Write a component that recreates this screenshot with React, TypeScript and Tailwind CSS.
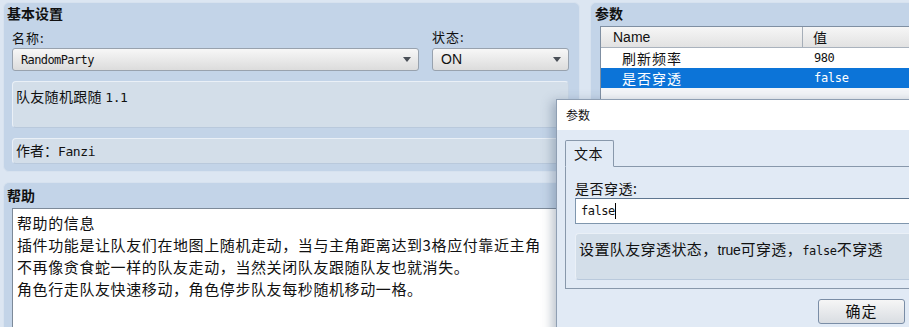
import type { ReactNode } from 'react'

const cjk = "font-['Noto_Sans_CJK_SC',sans-serif]"
const mono = "font-['DejaVu_Sans_Mono','Noto_Sans_CJK_SC',monospace]"

function Arrow() {
  return (
    <svg width="8" height="5" viewBox="0 0 8 5" className="shrink-0">
      <path d="M0 0 H8 L4 5 Z" fill="#4a4f57" />
    </svg>
  )
}

function Select({ children, className }: { children: ReactNode; className?: string }) {
  return (
    <div className={`h-[23px] flex items-center justify-between pl-[8px] pr-[7px] rounded-[3px] border border-[#98a2ae] bg-gradient-to-b from-[#f7f7f7] to-[#dcdcdc] ${className ?? ''}`}>
      {children}
      <Arrow />
    </div>
  )
}

function Box({ children, className }: { children: ReactNode; className?: string }) {
  return (
    <div className={`rounded-[4px] border border-[#eaf0f7] border-b-[#b9c9dc] border-r-[#c6d4e4] bg-[#d3dee9] ${className ?? ''}`}>
      {children}
    </div>
  )
}

export default function App() {
  return (
    <div className={`relative w-[909px] h-[327px] overflow-hidden bg-[#dce6f2] flex gap-[10px] pl-[3px] pt-[2px] text-[#111] ${cjk}`}>
      {/* left column */}
      <div className="w-[577px] shrink-0 flex flex-col gap-[10px]">
        {/* 基本设置 */}
        <div className="h-[170px] shrink-0 rounded-[6px] bg-[#c3d4e8] border border-[#d7e2ef] pl-[8px] pr-[10px]">
          <div className="h-[21px] leading-[21px] text-[14px] font-bold -ml-[5px]">基本设置</div>
          <div className="flex gap-[13px]">
            <div className="w-[407px]">
              <div className="h-[24px] pt-[3px] leading-[21px] text-[13px] tracking-[1px]">名称:</div>
              <Select>
                <span className={`${mono} text-[12px] tracking-[-0.6px]`}>RandomParty</span>
              </Select>
            </div>
            <div className="w-[137px]">
              <div className="h-[24px] pt-[2px] leading-[21px] text-[13px] tracking-[1px]">状态:</div>
              <Select>
                <span className="font-['Liberation_Sans',sans-serif] text-[14px]">ON</span>
              </Select>
            </div>
          </div>
          <Box className="mt-[10px] h-[47px] pl-[3px] pt-[4px]">
            <div className="leading-[20px] text-[14px] tracking-[0.3px]">
              队友随机跟随 <span className={`${mono} text-[13px] tracking-[-0.4px]`}>1.1</span>
            </div>
          </Box>
          <Box className="mt-[10px] h-[26px] pl-[3px] flex items-center">
            <span className="text-[14px] leading-[20px]">作者：<span className={`${mono} text-[13px] tracking-[-0.4px]`}>Fanzi</span></span>
          </Box>
        </div>

        {/* 帮助 */}
        <div className="flex-1 min-h-0 rounded-t-[6px] bg-[#c3d4e8] border border-[#d7e2ef] border-b-0 pl-[8px] pr-[10px]">
          <div className="h-[25px] leading-[25px] text-[14px] font-bold -ml-[5px]">帮助</div>
          <div className="h-[130px] bg-white border border-[#7d8a99] pl-[4px] pt-[3px] text-[15px] leading-[22px] tracking-[0.6px]">
            <div>帮助的信息</div>
            <div>插件功能是让队友们在地图上随机走动，当与主角距离达到3格应付靠近主角</div>
            <div>不再像贪食蛇一样的队友走动，当然关闭队友跟随队友也就消失。</div>
            <div>角色行走队友快速移动，角色停步队友每秒随机移动一格。</div>
          </div>
        </div>
      </div>

      {/* right column: 参数 */}
      <div className="flex-1 rounded-tl-[6px] bg-[#c3d4e8] border border-[#d7e2ef] border-r-0 pl-[9px]">
        <div className="h-[23px] leading-[21px] text-[14px] font-bold -ml-[5px]">参数</div>
        <div className="border border-[#7f8fa2] border-r-0 bg-white">
          <div className="flex h-[21px] bg-gradient-to-b from-[#f6f6f6] to-[#e2e2e2] border-b border-[#a9b2bd] font-['Liberation_Sans',sans-serif] text-[14px] leading-[21px]">
            <div className="w-[202px] pl-[12px] border-r border-[#a6aeb8]">Name</div>
            <div className={`pl-[10px] ${cjk}`}>值</div>
          </div>
          <div className="flex h-[20px] text-[14px] leading-[20px]">
            <div className="w-[202px] pl-[21px] tracking-[1px]">刷新频率</div>
            <div className={`pl-[11px] ${mono} text-[12px] tracking-[-0.5px]`}>980</div>
          </div>
          <div className="flex h-[20px] text-[14px] leading-[20px] bg-[#0c74d8] text-white">
            <div className="w-[202px] pl-[21px] tracking-[1px]">是否穿透</div>
            <div className={`pl-[11px] ${mono} text-[12px] tracking-[-0.3px]`}>false</div>
          </div>
          <div className="h-[30px] bg-[#f3f5f8]" />
        </div>
      </div>

      {/* dialog window */}
      <div className="absolute left-[556px] top-[99px] w-[370px] h-[240px] border border-[#8f9fb3] bg-[#e1eaf5] shadow-[-4px_2px_10px_rgba(60,80,110,0.35)] flex flex-col">
        <div className="h-[30px] bg-white flex items-center pl-[9px] text-[12px]">参数</div>
        <div className="pt-[10px] pl-[8px]">
          <div className="w-[49px] h-[27px] -mb-[1px] relative z-10 border border-[#8898ab] border-b-[#e1eaf5] rounded-t-[2px] bg-[#e1eaf5] pl-[8px] text-[14px] leading-[25px] tracking-[0.5px]">
            文本
          </div>
          <div className="h-[123px] border border-[#8898ab] border-r-0 pl-[9px] pt-[12px]">
            <div className="h-[19px] leading-[19px] text-[14px] tracking-[0.5px]">是否穿透:</div>
            <div className="h-[26px] bg-white border border-[#7f96ad] border-t-[#5e7690] border-r-0 flex items-center pl-[5px]">
              <span className={`${mono} text-[12px] tracking-[-0.5px]`}>false</span>
              <span className="w-px h-[16px] bg-black" />
            </div>
            <Box className="mt-[9px] h-[47px] border-r-0 rounded-r-none pl-[3px] pt-[5px]">
              <div className="text-[15px] leading-[20px] tracking-[0.4px]">
                设置队友穿透状态，<span className="font-['Liberation_Sans',sans-serif] text-[14px] tracking-[-0.3px]">true</span>可穿透，<span className={`${mono} text-[12px] tracking-[-0.3px]`}>false</span>不穿透
              </div>
            </Box>
          </div>
          <div className="flex pl-[253px] pt-[10px]">
            <div className="w-[87px] h-[25px] rounded-[3px] border border-[#7a8da6] bg-gradient-to-b from-[#f6f6f6] to-[#d9dde2] flex items-center justify-center text-[15px] tracking-[1px]">
              确定
            </div>
          </div>
        </div>
      </div>
    </div>
  )
}
